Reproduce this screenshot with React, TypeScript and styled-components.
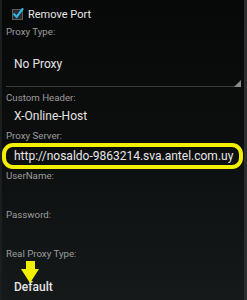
import React from "react";
import styled, { createGlobalStyle } from "styled-components";

const Global = createGlobalStyle`
  html, body { margin: 0; padding: 0; background: #0a0b0b; }
  body { font-family: Roboto, "Liberation Sans", sans-serif; }
`;

const Screen = styled.div`
  position: relative;
  width: 247px;
  height: 300px;
  box-sizing: border-box;
  overflow: hidden;
  border-left: 2px solid #1c1d1d;
  border-right: 3px solid #2c2d2e;
  background: linear-gradient(180deg, #070808 0%, #0c0e0e 45%, #15191a 100%);
  padding-left: 4px;
  display: flex;
  flex-direction: column;
`;

const CheckRow = styled.label`
  display: flex;
  align-items: center;
  gap: 4px;
  height: 16px;
  padding-top: 6px;
  padding-left: 6px;
  color: #e6e6e6;
  font-size: 11px;
`;

const Label = styled.div<{ $mt: number }>`
  margin-top: ${(p) => p.$mt}px;
  height: 12px;
  line-height: 12px;
  font-size: 9.7px;
  color: #9c9c9c;
`;

const Value = styled.div<{ $mt: number; $bold?: boolean }>`
  margin-top: ${(p) => p.$mt}px;
  height: 16px;
  line-height: 16px;
  padding-left: 8px;
  font-size: 12px;
  font-weight: ${(p) => (p.$bold ? 500 : 400)};
  color: #e4e4e4;
  white-space: nowrap;
`;

const Spinner = styled.div`
  position: relative;
  margin-right: 4px;
  padding: 18px 0 14px 8px;
  border-bottom: 1px solid #3a3c3c;
  height: 16px;
  line-height: 16px;
  font-size: 12px;
  color: #e4e4e4;
`;

const Corner = styled.svg`
  position: absolute;
  right: -1px;
  bottom: -1px;
`;

const Highlight = styled.div`
  margin: 1px 1px 0 -4px;
  height: 18px;
  line-height: 18px;
  border: 4px solid #f2f000;
  border-radius: 11px;
  padding-left: 8px;
  font-size: 12px;
  color: #e8e8e8;
  white-space: nowrap;
  overflow: hidden;
`;

const ArrowField = styled.div`
  position: relative;
`;

const Arrow = styled.svg`
  position: absolute;
  left: 15px;
  top: 1px;
`;

export default function App() {
  return (
    <>
      <Global />
      <Screen>
        <CheckRow>
          <svg width="12" height="12" viewBox="0 0 12 12">
            <rect x="0.5" y="1.5" width="10" height="10" fill="#2a2d2e" stroke="#5a5d5e" strokeWidth="1" />
            <path d="M2.3 6.4 L4.6 8.8 L10.4 1.2" fill="none" stroke="#33b5e5" strokeWidth="2.2" strokeLinecap="square" />
          </svg>
          Remove Port
        </CheckRow>
        <Label $mt={4}>Proxy Type:</Label>
        <Spinner>
          No Proxy
          <Corner width="7" height="7" viewBox="0 0 7 7">
            <polygon points="7,0 7,7 0,7" fill="#8a8c8c" />
          </Corner>
        </Spinner>
        <Label $mt={5}>Custom Header:</Label>
        <Value $mt={4}>X-Online-Host</Value>
        <Label $mt={6}>Proxy Server:</Label>
        <Highlight>http://nosaldo-9863214.sva.antel.com.uy</Highlight>
        <Label $mt={1}>UserName:</Label>
        <Label $mt={27}>Password:</Label>
        <Label $mt={27}>Real Proxy Type:</Label>
        <ArrowField>
          <Value $mt={19} $bold>Default</Value>
          <Arrow width="18" height="22" viewBox="0 0 18 22">
            <polygon points="5,0 14,0 14,8 18,8 9,22 0,8 5,8" fill="#f2f000" />
          </Arrow>
        </ArrowField>
      </Screen>
    </>
  );
}
